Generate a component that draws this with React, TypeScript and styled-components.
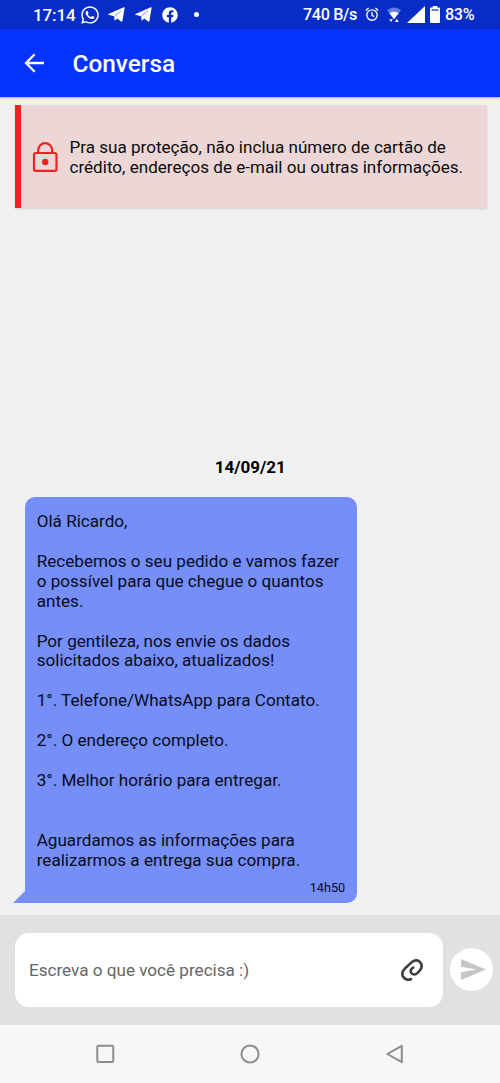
import React from "react";
import styled, { createGlobalStyle } from "styled-components";
import { FaFacebook, FaWhatsapp } from "react-icons/fa";

const GlobalStyle = createGlobalStyle`
  * { box-sizing: border-box; }
  body {
    margin: 0;
    background: #f0f0f0;
    font-family: Roboto, "Liberation Sans", sans-serif;
    color: #0c0c0c;
  }
  svg { display: block; flex: none; }
`;

const Screen = styled.div`
  width: 500px;
  height: 1083px;
  display: flex;
  flex-direction: column;
  overflow: hidden;
`;

const StatusBar = styled.div`
  height: 29px;
  flex: none;
  display: flex;
  align-items: center;
  justify-content: space-between;
  padding: 0 24px 0 33px;
  background: #082cc8;
  color: #fff;
`;

const StatusGroup = styled.div`
  display: flex;
  align-items: center;
`;

const StatusText = styled.span<{ $width: number; $tight?: boolean }>`
  width: ${(p) => p.$width}px;
  padding-top: 1px;
  font-size: ${(p) => (p.$tight ? 16.2 : 17)}px;
  letter-spacing: ${(p) => (p.$tight ? -0.35 : -0.1)}px;
  font-weight: 500;
  line-height: 20px;
  white-space: nowrap;
`;

const StatusIcon = styled.span<{ $gap: number }>`
  display: flex;
  margin-left: ${(p) => p.$gap}px;
`;

const Dot = styled.span`
  width: 5px;
  height: 5px;
  margin-left: 16px;
  border-radius: 50%;
  background: #fff;
`;

const AppBar = styled.header`
  height: 68px;
  flex: none;
  display: flex;
  align-items: center;
  gap: 27.5px;
  padding-left: 24px;
  background: #0433ff;
  box-shadow: 0 1px 2px rgba(0, 0, 0, 0.28);
`;

const Title = styled.h1`
  margin: 2px 0 0;
  font-size: 24.4px;
  font-weight: 500;
  line-height: 28px;
  color: #fff;
`;

const Content = styled.main`
  flex: 1;
  min-height: 0;
  display: flex;
  flex-direction: column;
  justify-content: space-between;
  padding: 7.5px 13.5px 12px 15px;
`;

const Notice = styled.section`
  height: 103.5px;
  display: flex;
  align-items: center;
  gap: 11.5px;
  padding: 2px 0 0 11px;
  border-left: 6px solid #ef2222;
  background: #ecd6d6;
  box-shadow: 0 1px 2px rgba(0, 0, 0, 0.14);
`;

const NoticeText = styled.p`
  margin: 2px 0 0;
  font-size: 17.08px;
  line-height: 19.92px;
  white-space: pre;
`;

const Conversation = styled.div`
  display: flex;
  flex-direction: column;
  align-items: flex-start;
  gap: 20px;
`;

const DateLabel = styled.time`
  align-self: center;
  margin-left: -1px;
  font-size: 17px;
  font-weight: 700;
  line-height: 20px;
  color: #000;
`;

const Bubble = styled.article`
  position: relative;
  width: 332.5px;
  height: 406px;
  margin-left: 9.7px;
  padding: 15px 12px 7.5px;
  border-radius: 10px 10px 10px 0;
  background: #768ef8;
  display: flex;
  flex-direction: column;
  justify-content: space-between;
  color: #080c20;
`;

const BubbleTail = styled.span`
  position: absolute;
  right: 100%;
  bottom: 0;
  width: 12px;
  height: 12px;
  margin-right: -0.3px;
  background: #768ef8;
  clip-path: polygon(100% 0, 100% 100%, 0 100%);
`;

const Message = styled.p`
  margin: 0;
  font-size: 17.1px;
  line-height: 19.92px;
  white-space: pre;
`;

const SentAt = styled.span`
  align-self: flex-end;
  font-size: 12.7px;
  line-height: 16px;
`;

const Composer = styled.footer`
  height: 109.5px;
  flex: none;
  display: flex;
  align-items: center;
  gap: 7px;
  padding: 0 7px 0 15px;
  background: #e1e1e1;
`;

const InputBox = styled.div`
  width: 428px;
  height: 73.5px;
  display: flex;
  align-items: center;
  justify-content: space-between;
  padding: 0 19px 0 14px;
  border-radius: 14px;
  background: #fff;
`;

const Placeholder = styled.span`
  font-size: 17.1px;
  line-height: 20px;
  color: #666;
`;

const SendButton = styled.button`
  width: 43px;
  height: 43px;
  flex: none;
  display: flex;
  align-items: center;
  justify-content: center;
  padding: 0 0 0 4px;
  border: 0;
  border-radius: 50%;
  background: #fff;
`;

const NavBar = styled.nav`
  height: 58.5px;
  flex: none;
  display: flex;
  align-items: center;
  justify-content: space-between;
  padding: 0 95px;
  background: #f7f7f7;
`;

const TelegramIcon = () => (
  <svg width="17" height="15" viewBox="0 0 17 15" fill="#fff">
    <path d="M.4 6.900 15.800.3q1-.3.8.8L14.400 14q-.3 1-1.200.4L9.200 11.500 7.400 13.300q-.8.7-.9-.5L6.100 9.300.5 7.700q-.7-.4-.1-.8z" />
    <path d="M6.500 9 13 4" stroke="#082cc8" strokeWidth=".5" />
  </svg>
);

const AlarmIcon = () => (
  <svg width="14" height="15" viewBox="0 0 14 15" fill="none" stroke="#fff" strokeWidth="1.35">
    <circle cx="7" cy="8" r="5.2" />
    <path d="M7 5v3.2l2.2 1.4M.8 3.4 3.6 1M13.2 3.4 10.4 1" />
  </svg>
);

const WifiIcon = () => (
  <svg width="14" height="16" viewBox="0 0 14 16" fill="#fff">
    <path d="M0 3.2Q7-2.3 14 3.2L11.5 6.3Q7 3.6 2.5 6.3Z" opacity=".38" />
    <path d="M2.300 6.300Q7 3.400 11.700 6.300L7 12.200Z" />
    <path d="M2.300 12.200h3.500l-1.700 2.800zM9.800 11.800l1.800 3.200H8z" />
  </svg>
);

const SignalIcon = () => (
  <svg width="18" height="17" viewBox="0 0 18 17" fill="#fff">
    <path d="M18 0v17H0z" />
  </svg>
);

const BatteryIcon = () => (
  <svg width="10" height="17" viewBox="0 0 10 17">
    <path d="M2.7 0h4.6v1.5H9a1 1 0 0 1 1 1V16a1 1 0 0 1-1 1H1a1 1 0 0 1-1-1V2.500a1 1 0 0 1 1-1h1.700z" fill="#fff" />
    <path d="M1.500 4h7" stroke="#082cc8" strokeWidth="1.200" />
  </svg>
);

const BackIcon = () => (
  <svg width="21" height="20" viewBox="0 0 21 20" fill="none" stroke="#fff" strokeWidth="2.300">
    <path d="M20 10H2.200M10.700 1.200 2 10l8.700 8.800" />
  </svg>
);

const LockIcon = () => (
  <svg width="26" height="31" viewBox="0 0 26 31" fill="none" stroke="#ef2222" strokeWidth="2.200">
    <rect x="2" y="11" width="22.500" height="17.800" rx="1.800" />
    <path d="M6.200 11V8.200a7 7 0 0 1 14 0V11" />
    <circle cx="13.200" cy="20" r="3.200" fill="#ef2222" stroke="none" />
  </svg>
);

const AttachIcon = () => (
  <svg width="24" height="24" viewBox="0 0 24 24" fill="none" stroke="#3d3d3d" strokeWidth="2.600" strokeLinecap="round" strokeLinejoin="round">
    <path d="M11 21C6.500 23.300 1.200 19.300 2.500 14.300C2.900 12.800 3.700 11.800 4.700 10.800L11.200 4.600C14.200 1.700 18 1.600 20.200 4.300C22.300 7 21.800 10.500 19.300 13.200L17.300 15.200C15.300 17.200 12.400 16.800 11.200 14.900C10.100 13 11 10.900 13.200 9.700" />
  </svg>
);

const SendIcon = () => (
  <svg width="25" height="21" viewBox="0 0 25 21" fill="#c6c6c6">
    <path d="M0 0 25 10.500 0 21V13.200L15.500 10.500 0 7.800z" />
  </svg>
);

const RecentsIcon = () => (
  <svg width="20" height="20" viewBox="0 0 20 20" fill="none" stroke="#8c8c8c" strokeWidth="2">
    <rect x="2.300" y="1.700" width="16" height="16.200" rx="1.200" />
  </svg>
);

const HomeIcon = () => (
  <svg width="20" height="20" viewBox="0 0 20 20" fill="none" stroke="#8c8c8c" strokeWidth="2">
    <circle cx="10" cy="10" r="8.600" />
  </svg>
);

const NavBackIcon = () => (
  <svg width="20" height="20" viewBox="0 0 20 20" fill="none" stroke="#8c8c8c" strokeWidth="2" strokeLinejoin="round">
    <path d="M16.800 1.800v16.400L2.300 10z" />
  </svg>
);

const message = `Olá Ricardo,

Recebemos o seu pedido e vamos fazer
o possível para que chegue o quantos
antes.

Por gentileza, nos envie os dados
solicitados abaixo, atualizados!

1°. Telefone/WhatsApp para Contato.

2°. O endereço completo.

3°. Melhor horário para entregar.


Aguardamos as informações para
realizarmos a entrega sua compra.`;

const warning = `Pra sua proteção, não inclua número de cartão de
crédito, endereços de e-mail ou outras informações.`;

export default function App() {
  return (
    <>
      <GlobalStyle />
      <Screen>
        <StatusBar>
          <StatusGroup>
            <StatusText $width={44}>17:14</StatusText>
            <StatusIcon $gap={3}><FaWhatsapp size={20} /></StatusIcon>
            <StatusIcon $gap={8}><TelegramIcon /></StatusIcon>
            <StatusIcon $gap={10}><TelegramIcon /></StatusIcon>
            <StatusIcon $gap={10}><FaFacebook size={16} /></StatusIcon>
            <Dot />
          </StatusGroup>
          <StatusGroup>
            <StatusText $width={54} $tight>740 B/s</StatusText>
            <StatusIcon $gap={8}><AlarmIcon /></StatusIcon>
            <StatusIcon $gap={8}><WifiIcon /></StatusIcon>
            <StatusIcon $gap={6}><SignalIcon /></StatusIcon>
            <StatusIcon $gap={5}><BatteryIcon /></StatusIcon>
            <StatusIcon $gap={5}><StatusText $width={31} $tight>83%</StatusText></StatusIcon>
          </StatusGroup>
        </StatusBar>
        <AppBar>
          <BackIcon />
          <Title>Conversa</Title>
        </AppBar>
        <Content>
          <Notice>
            <LockIcon />
            <NoticeText>{warning}</NoticeText>
          </Notice>
          <Conversation>
            <DateLabel>14/09/21</DateLabel>
            <Bubble>
              <Message>{message}</Message>
              <SentAt>14h50</SentAt>
              <BubbleTail />
            </Bubble>
          </Conversation>
        </Content>
        <Composer>
          <InputBox>
            <Placeholder>Escreva o que você precisa :)</Placeholder>
            <AttachIcon />
          </InputBox>
          <SendButton aria-label="Enviar"><SendIcon /></SendButton>
        </Composer>
        <NavBar>
          <RecentsIcon />
          <HomeIcon />
          <NavBackIcon />
        </NavBar>
      </Screen>
    </>
  );
}
